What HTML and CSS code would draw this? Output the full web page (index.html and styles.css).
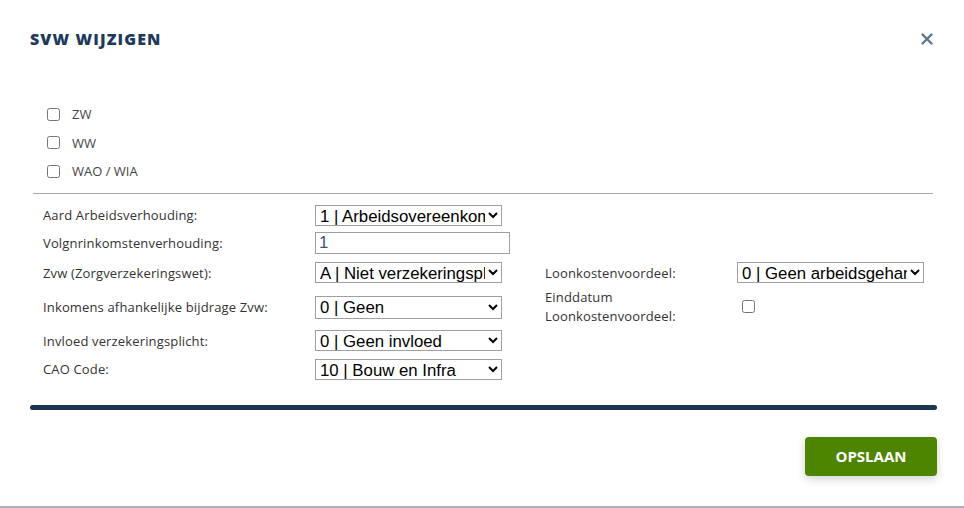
FILE: index.html
```html
<!DOCTYPE html>
<html lang="nl">
<head>
  <meta charset="UTF-8">
  <title>SVW wijzigen</title>
  <link rel="stylesheet" href="styles.css">
</head>
<body>
  <div class="modal">
    <div class="modal-header">
      <h2 class="modal-title">SVW WIJZIGEN</h2>
      <button class="close-btn" type="button" aria-label="Sluiten">
        <svg width="12" height="12" viewBox="0 0 12 12"><path d="M1.5 1.5 L10.5 10.5 M10.5 1.5 L1.5 10.5" stroke="#5b7690" stroke-width="2.4" stroke-linecap="round"/></svg>
      </button>
    </div>

    <div class="check-list">
      <label class="check-row"><input type="checkbox"> <span>ZW</span></label>
      <label class="check-row"><input type="checkbox"> <span>WW</span></label>
      <label class="check-row"><input type="checkbox"> <span>WAO / WIA</span></label>
    </div>

    <hr class="divider">

    <div class="form-grid">
      <label class="lbl">Aard Arbeidsverhouding:</label>
      <select class="sel"><option>1 | Arbeidsovereenkomst</option></select>
      <div></div><div></div>

      <label class="lbl">Volgnrinkomstenverhouding:</label>
      <input class="txt" type="text" value="1">
      <div></div><div></div>

      <label class="lbl">Zvw (Zorgverzekeringswet):</label>
      <select class="sel"><option>A | Niet verzekeringsplichtig</option></select>
      <label class="lbl">Loonkostenvoordeel:</label>
      <select class="sel"><option>0 | Geen arbeidsgehandicapte</option></select>

      <label class="lbl">Inkomens afhankelijke bijdrage Zvw:</label>
      <select class="sel sel-tall"><option>0 | Geen</option></select>
      <label class="lbl lbl-wrap">Einddatum Loonkostenvoordeel:</label>
      <div><input class="cb-inline" type="checkbox"></div>

      <label class="lbl">Invloed verzekeringsplicht:</label>
      <select class="sel"><option>0 | Geen invloed</option></select>
      <div></div><div></div>

      <label class="lbl">CAO Code:</label>
      <select class="sel"><option>10 | Bouw en Infra</option></select>
      <div></div><div></div>
    </div>

    <div class="bar"></div>

    <div class="modal-footer">
      <button class="save-btn" type="button">OPSLAAN</button>
    </div>
  </div>
</body>
</html>
```

FILE: styles.css
```css
/* pagina */
body {
  margin: 0;
  background: #ffffff;
  font-family: 'Open Sans', 'Noto Sans', sans-serif;
  color: #333;
}

.modal {
  width: 964px;
  height: 506px;
  border-bottom: 2px solid #a9b1ba;
  position: relative;
}

/* kop */
.modal-header {
  display: flex;
  align-items: center;
  justify-content: space-between;
  height: 78px;
  padding: 0 30px 0 30px;
}

.modal-title {
  margin: 0;
  font-family: 'Open Sans', sans-serif;
  font-size: 16px;
  font-weight: 800;
  letter-spacing: 1.1px;
  color: #1d3a5b;
}

.close-btn {
  border: none;
  background: none;
  padding: 0;
  width: 12px;
  height: 12px;
  margin-right: 1px;
  cursor: pointer;
}

/* vinkjes */
.check-list {
  margin: 22px 0 0 46px;
}

.check-row {
  display: flex;
  align-items: center;
  height: 28.5px;
  font-size: 13px;
  color: #444;
}

.check-row input {
  margin: 0 12px 0 1px;
  width: 13px;
  height: 13px;
}

.divider {
  border: none;
  border-top: 1px solid #aaaaaa;
  margin: 7px 31px 0 33px;
}

/* formulier */
.form-grid {
  display: grid;
  grid-template-columns: 272px 230px 192px auto;
  grid-template-rows: 27px 28px 32px 37px 30px 27px;
  align-items: center;
  margin: 8px 0 0 43px;
}

.lbl {
  font-size: 13px;
  color: #333;
  letter-spacing: 0.15px;
}

.lbl-wrap {
  display: block;
  width: 150px;
  line-height: 19px;
}

.sel {
  width: 187px;
  height: 21px;
  font-family: 'Liberation Sans', Arial, sans-serif;
  font-size: 16.8px;
  color: #000;
  background: #fff;
  border: 1px solid #a0a0a0;
  border-radius: 0;
  padding: 0;
  margin: 0;
}

.sel-tall {
  height: 23px;
}

.txt {
  width: 195px;
  height: 22px;
  box-sizing: border-box;
  font-family: 'Liberation Sans', Arial, sans-serif;
  font-size: 16.8px;
  color: #3b5576;
  border: 1px solid #a0a0a0;
  padding: 0 3px;
  margin: 0;
}

.cb-inline {
  width: 13px;
  height: 13px;
  margin: 0 0 6px 5px;
}

/* scheiding */
.bar {
  height: 5px;
  background: #1c3550;
  border-radius: 3px;
  margin: 22px 27px 0 30px;
}

/* voet */
.modal-footer {
  display: flex;
  justify-content: flex-end;
  padding: 27px 27px 0 0;
}

.save-btn {
  width: 132px;
  height: 39px;
  background: #4e8500;
  color: #fff;
  border: none;
  border-radius: 4px;
  font-family: 'Open Sans', sans-serif;
  font-size: 15px;
  font-weight: 700;
  box-shadow: 0 3px 8px rgba(0, 0, 0, 0.18);
  cursor: pointer;
}
```
